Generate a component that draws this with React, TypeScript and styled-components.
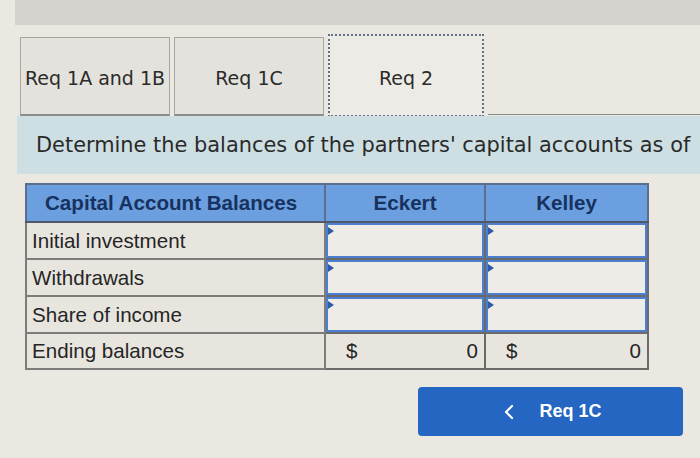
import React from 'react';
import styled, { createGlobalStyle } from 'styled-components';

const GlobalStyle = createGlobalStyle`
  html, body {
    margin: 0;
    padding: 0;
    background-color: #ebe8e2;
  }
`
const Page = styled.div`
  width: 700px;
  height: 458px;
  overflow: hidden;
  background-color: #ebe8e2;
  display: flex;
  flex-direction: column;
`
const TopBar = styled.div`
  height: 25px;
  margin-left: 15px;
  background-color: #d5d2ce;
`
const TabStrip = styled.div`
  display: flex;
  align-items: flex-end;
  margin-top: 9px;
  padding-left: 20px;
  height: 82px;
`
const Tab = styled.div<{ $active?: boolean }>`
  box-sizing: border-box;
  width: ${p => (p.$active ? '156px' : '150px')};
  height: ${p => (p.$active ? '83px' : '79px')};
  margin-right: 4px;
  margin-bottom: ${p => (p.$active ? '-1px' : '0')};
  display: flex;
  align-items: center;
  justify-content: center;
  background-color: ${p => (p.$active ? '#edebe5' : '#e4e2dc')};
  border: ${p => (p.$active ? '2px dotted #5f6f86' : '1px solid #a7a6a2')};
  border-bottom: ${p => (p.$active ? '2px dotted #5f6f86' : '2px solid #8d8c89')};
  font-family: 'DejaVu Sans', Verdana, sans-serif;
  font-size: 19px;
  color: #2b2b2b;
  padding-top: 4px;
  white-space: nowrap;
`
const TabLine = styled.div`
  flex: 1;
  height: 1px;
  margin-bottom: 1px;
  background-color: #8d8c89;
`
const Band = styled.div`
  margin-left: 17px;
  height: 58px;
  display: flex;
  align-items: center;
  padding-left: 19px;
  background-color: #cddfe2;
  font-family: 'DejaVu Sans', Verdana, sans-serif;
  font-size: 20.9px;
  color: #2a2a2a;
  white-space: nowrap;
  overflow: hidden;
`
const Table = styled.table`
  margin: 9px 0 0 25px;
  width: 622px;
  border-collapse: collapse;
  table-layout: fixed;
  font-family: 'Liberation Sans', Arial, sans-serif;
  font-size: 20.6px;
  color: #252525;
`
const HeadCell = styled.th<{ $left?: boolean }>`
  height: 36px;
  padding: 0 ${p => (p.$left ? '18px' : '0')};
  text-align: ${p => (p.$left ? 'left' : 'center')};
  background-color: #6b9fe0;
  border: 2px solid #5a6f8c;
  border-bottom: 2px solid #4f5866;
  color: #17325e;
  font-weight: bold;
  white-space: nowrap;
`
const LabelCell = styled.td`
  height: 36.2px;
  box-sizing: border-box;
  padding: 0 5px;
  background-color: #e8e5df;
  border: 2px solid #7c7c7a;
  white-space: nowrap;
`
const EntryCell = styled.td`
  height: 36.2px;
  padding: 0;
  box-sizing: border-box;
  background-color: #e8e5df;
  border: 2px solid #6a6a6a;
`
const InputBox = styled.div`
  position: relative;
  box-sizing: border-box;
  height: 35px;
  border: 2px solid #4d7fd1;
  background-color: #eeece7;
  &::before {
    content: '';
    position: absolute;
    left: 0;
    top: 2px;
    border-top: 4px solid transparent;
    border-bottom: 4px solid transparent;
    border-left: 6px solid #2f5aa8;
  }
`
const Amount = styled.div`
  display: flex;
  justify-content: space-between;
  align-items: center;
  padding: 0 6px 0 20px;
`
const ButtonRow = styled.div`
  display: flex;
  justify-content: flex-end;
  padding-right: 17px;
  margin-top: 17px;
`
const PrevButton = styled.button`
  width: 265px;
  height: 49px;
  border: none;
  border-radius: 4px;
  background-color: #2566c3;
  color: #ffffff;
  display: flex;
  align-items: center;
  justify-content: center;
  gap: 24px;
  font-family: 'Liberation Sans', Arial, sans-serif;
  font-weight: bold;
  font-size: 18px;
  padding: 0 0 0 4px;
  cursor: pointer;
`

const rows = ['Initial investment', 'Withdrawals', 'Share of income'];

function App() {
  return (
    <Page>
      <GlobalStyle />
      <TopBar />
      <TabStrip>
        <Tab>Req 1A and 1B</Tab>
        <Tab>Req 1C</Tab>
        <Tab $active>Req 2</Tab>
        <TabLine />
      </TabStrip>
      <Band>Determine the balances of the partners' capital accounts as of</Band>
      <Table>
        <colgroup>
          <col style={{ width: 299 }} />
          <col style={{ width: 160 }} />
          <col style={{ width: 163 }} />
        </colgroup>
        <thead>
          <tr>
            <HeadCell $left>Capital Account Balances</HeadCell>
            <HeadCell>Eckert</HeadCell>
            <HeadCell>Kelley</HeadCell>
          </tr>
        </thead>
        <tbody>
          {
            rows.map((label) => (
              <tr key={label}>
                <LabelCell>{ label }</LabelCell>
                <EntryCell><InputBox /></EntryCell>
                <EntryCell><InputBox /></EntryCell>
              </tr>
            ))
          }
          <tr>
            <LabelCell>Ending balances</LabelCell>
            <EntryCell><Amount><span>$</span><span>0</span></Amount></EntryCell>
            <EntryCell><Amount><span>$</span><span>0</span></Amount></EntryCell>
          </tr>
        </tbody>
      </Table>
      <ButtonRow>
        <PrevButton>
          <svg width="12" height="18" viewBox="0 0 12 18">
            <path d="M9 3 L3 9 L9 15" fill="none" stroke="#ffffff" strokeWidth="2.2" strokeLinecap="round" strokeLinejoin="round" />
          </svg>
          <span>Req 1C</span>
        </PrevButton>
      </ButtonRow>
    </Page>
  );
}

export default App;
